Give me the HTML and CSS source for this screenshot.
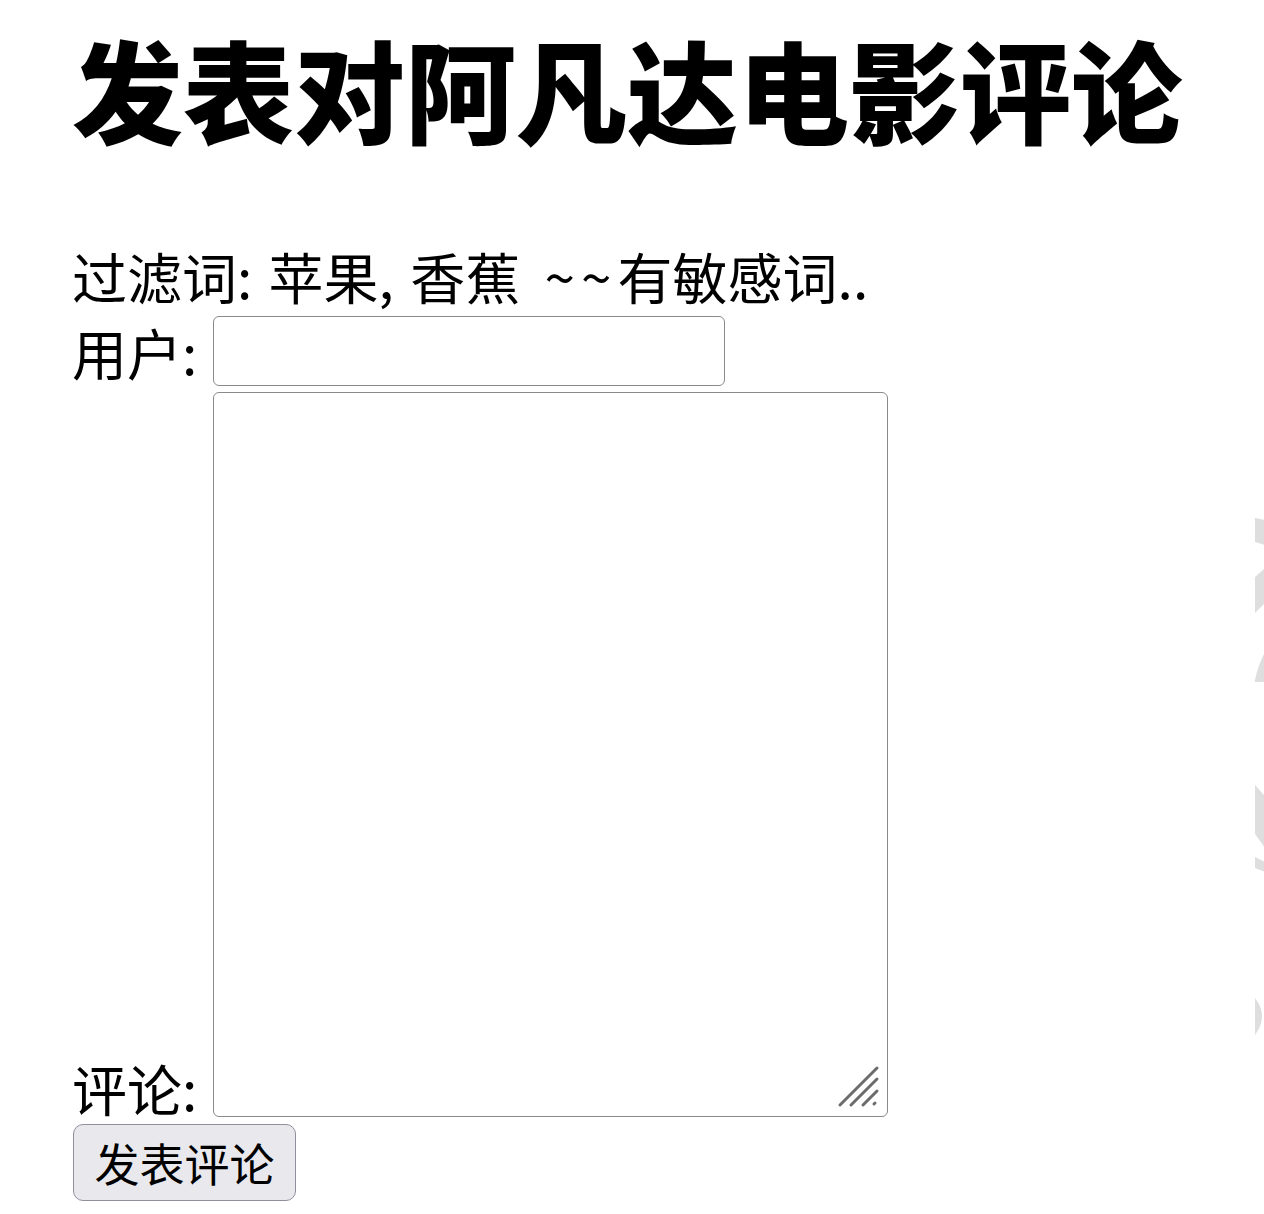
FILE: index.html
```html
<!DOCTYPE html>
<html lang="zh-CN">
<head>
<meta charset="utf-8">
<title>发表对阿凡达电影评论</title>
<link rel="stylesheet" href="styles.css">
</head>
<body>
<h1 class="title">发表对阿凡达电影评论</h1>
<form class="form" onsubmit="return false">
  <div class="filter">过滤词: 苹果, 香蕉 <span class="tilde">~~</span>有敏感词..</div>
  <div class="row row-user">
    <label class="label" for="user">用户:</label>
    <input class="input" id="user" type="text">
  </div>
  <div class="row row-comment">
    <label class="label label-bottom" for="comment">评论:</label>
    <div class="ta-wrap">
      <textarea class="textarea" id="comment"></textarea>
      <svg class="grip" width="44" height="44" viewBox="0 0 44 44" aria-hidden="true">
        <g stroke="#6b6b6b" stroke-width="3" stroke-linecap="round">
          <line x1="4" y1="40" x2="41" y2="3"/>
          <line x1="15" y1="40" x2="41" y2="14"/>
          <line x1="27" y1="40" x2="41" y2="26"/>
          <line x1="38" y1="39" x2="39" y2="38"/>
        </g>
      </svg>
    </div>
  </div>
  <button class="button" type="submit">发表评论</button>
</form>
<svg class="watermark" width="10" height="540" viewBox="0 0 10 540" aria-hidden="true">
  <g fill="#dedede">
    <polygon points="0,18 10,20 10,45 0,42"/>
    <polygon points="0,77 10,68 10,103 0,113"/>
    <path d="M10,152 Q3,165 0,180 L0,182 L10,182 Z"/>
    <polygon points="0,285 10,296 10,348 0,334"/>
    <polygon points="0,357 10,362 10,372 0,368"/>
    <path d="M0,498 Q14,516 0,535 Z"/>
  </g>
</svg>
</body>
</html>
```
FILE: styles.css
```css
html, body {
  margin: 0;
  padding: 0;
  background: #ffffff;
}

body {
  padding-left: 72px;
  font-family: "Noto Sans CJK SC", "Noto Sans", sans-serif;
  color: #000;
  position: relative;
  min-height: 1214px;
  box-sizing: border-box;
  overflow: hidden;
}

.title {
  margin: 32px 0 0;
  font-size: 111px;
  line-height: 111px;
  font-weight: 900;
  letter-spacing: 0;
  white-space: nowrap;
}

.form {
  display: flex;
  flex-direction: column;
  align-items: flex-start;
}

.filter {
  margin-top: 105px;
  font-size: 55px;
  line-height: 55px;
  white-space: nowrap;
  word-spacing: 4px;
}

.tilde {
  margin-left: 8px;
  letter-spacing: 6px;
}

.row {
  display: flex;
}

.row-user {
  margin-top: 13px;
  align-items: center;
}

.row-comment {
  margin-top: 6px;
  align-items: flex-end;
}

.label {
  width: 141px;
  font-size: 55px;
  line-height: 55px;
  white-space: nowrap;
}

.label-bottom {
  margin-bottom: 2px;
}

.input {
  box-sizing: border-box;
  width: 512px;
  height: 70px;
  margin: 0;
  border: 1px solid #8a8a8a;
  border-radius: 6px;
  background: #fff;
  font-size: 40px;
  padding: 0 8px;
}

.ta-wrap {
  position: relative;
  width: 675px;
  height: 725px;
}

.textarea {
  display: block;
  box-sizing: border-box;
  width: 675px;
  height: 725px;
  margin: 0;
  border: 1px solid #8a8a8a;
  border-radius: 6px;
  background: #fff;
  resize: none;
  font-size: 40px;
  padding: 4px 8px;
}

.grip {
  position: absolute;
  right: 8px;
  bottom: 8px;
  pointer-events: none;
}

.button {
  margin-top: 7px;
  box-sizing: border-box;
  width: 223px;
  height: 77px;
  margin-left: 1px;
  padding: 0;
  border: 1px solid #8f8f9d;
  border-radius: 10px;
  background: #e9e9ed;
  color: #000;
  font-family: "Noto Sans CJK SC", "Noto Sans", sans-serif;
  font-size: 45px;
  line-height: 1;
}

.watermark {
  position: absolute;
  left: 1255px;
  top: 500px;
}
```
